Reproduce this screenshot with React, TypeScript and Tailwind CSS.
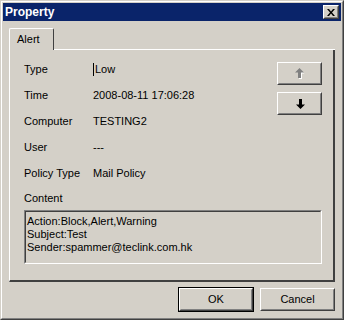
import React from "react";

const rows: [string, string][] = [
  ["Type", "Low"],
  ["Time", "2008-08-11 17:06:28"],
  ["Computer", "TESTING2"],
  ["User", "---"],
  ["Policy Type", "Mail Policy"],
];

// classic raised bevel: white/face outside-in top-left, dark/shadow bottom-right
const Raised = ({ className, children }: { className?: string; children?: React.ReactNode }) => (
  <div className={`border border-t-white border-l-white border-r-[#404040] border-b-[#404040] bg-[#d4d0c8] ${className ?? ""}`}>
    <div className="flex h-full w-full items-center justify-center border border-t-[#d4d0c8] border-l-[#d4d0c8] border-r-[#808080] border-b-[#808080]">
      {children}
    </div>
  </div>
);

const Arrow = ({ up, color }: { up?: boolean; color: string }) => (
  <svg width="10" height="11" viewBox="0 0 10 11" className={up ? "" : "rotate-180"}>
    {up && <path d="M5 1 L9.5 5.5 H7 V11 H4 V5.5 Z" fill="#fff" />}
    <path d="M4.5 0 L9 4.5 H6 V10 H3 V4.5 H0 Z" fill={color} />
  </svg>
);

export default function App() {
  return (
    <div
      className="h-[320px] w-[344px] border border-t-[#d4d0c8] border-l-[#d4d0c8] border-r-[#404040] border-b-[#404040] bg-[#d4d0c8] text-[11px] text-black"
      style={{ fontFamily: '"Liberation Sans", Arial, sans-serif' }}
    >
      <div className="flex h-full flex-col border border-t-white border-l-white border-r-[#808080] border-b-[#808080] p-px">
        {/* title bar */}
        <div className="flex h-[18px] items-center justify-between bg-[#0a246a] pl-[2px] pr-[2px]">
          <span className="font-bold text-white text-[12px]">Property</span>
          <Raised className="h-[14px] w-[16px]">
            <svg width="8" height="7" viewBox="0 0 8 7">
              <path d="M0 0 H2 L4 2.5 L6 0 H8 L5 3.5 L8 7 H6 L4 4.5 L2 7 H0 L3 3.5 Z" fill="#000" />
            </svg>
          </Raised>
        </div>

        <div className="flex flex-1 flex-col px-[6px] pt-[7px]">
          {/* tab strip */}
          <div className="flex h-[22px]">
            <div className="flex w-[45px] items-center rounded-t-[2px] border-l border-t border-r border-l-white border-t-white border-r-[#404040] pl-[7px]">
              Alert
            </div>
            <div className="flex-1 border-b border-b-white" />
          </div>

          {/* tab panel */}
          <div className="flex flex-col border-l border-l-white border-r-2 border-b-2 border-r-[#404040] border-b-[#404040] pl-[14px] pr-[11px] pt-[6px] pb-[16px]">
            <div className="flex">
              <div className="flex flex-1 flex-col">
                {rows.map(([label, value]) => (
                  <div key={label} className="flex h-[26px] items-center">
                    <span className="w-[69px]">{label}</span>
                    <span className="flex items-center">
                      {label === "Type" && <span className="mr-px h-[13px] w-px bg-black" />}
                      {value}
                    </span>
                  </div>
                ))}
              </div>
              <div className="flex flex-col gap-[7px] pt-[6px]">
                <Raised className="h-[23px] w-[45px]">
                  <Arrow up color="#808080" />
                </Raised>
                <Raised className="h-[23px] w-[45px]">
                  <Arrow color="#000" />
                </Raised>
              </div>
            </div>
            <div className="flex h-[24px] items-center">Content</div>
            <div className="h-[54px] border border-t-[#808080] border-l-[#808080] border-r-white border-b-white">
              <div className="h-full border border-t-[#404040] border-l-[#404040] border-r-[#d4d0c8] border-b-[#d4d0c8] pl-px pt-[3px] leading-[13px]">
                <div>Action:Block,Alert,Warning</div>
                <div>Subject:Test</div>
                <div>Sender:spammer@teclink.com.hk</div>
              </div>
            </div>
          </div>

          {/* buttons */}
          <div className="mt-[5px] flex justify-end gap-[6px]">
            <div className="border border-black">
              <Raised className="h-[23px] w-[74px]">OK</Raised>
            </div>
            <Raised className="mt-px h-[23px] w-[75px]">Cancel</Raised>
          </div>
        </div>
      </div>
    </div>
  );
}
